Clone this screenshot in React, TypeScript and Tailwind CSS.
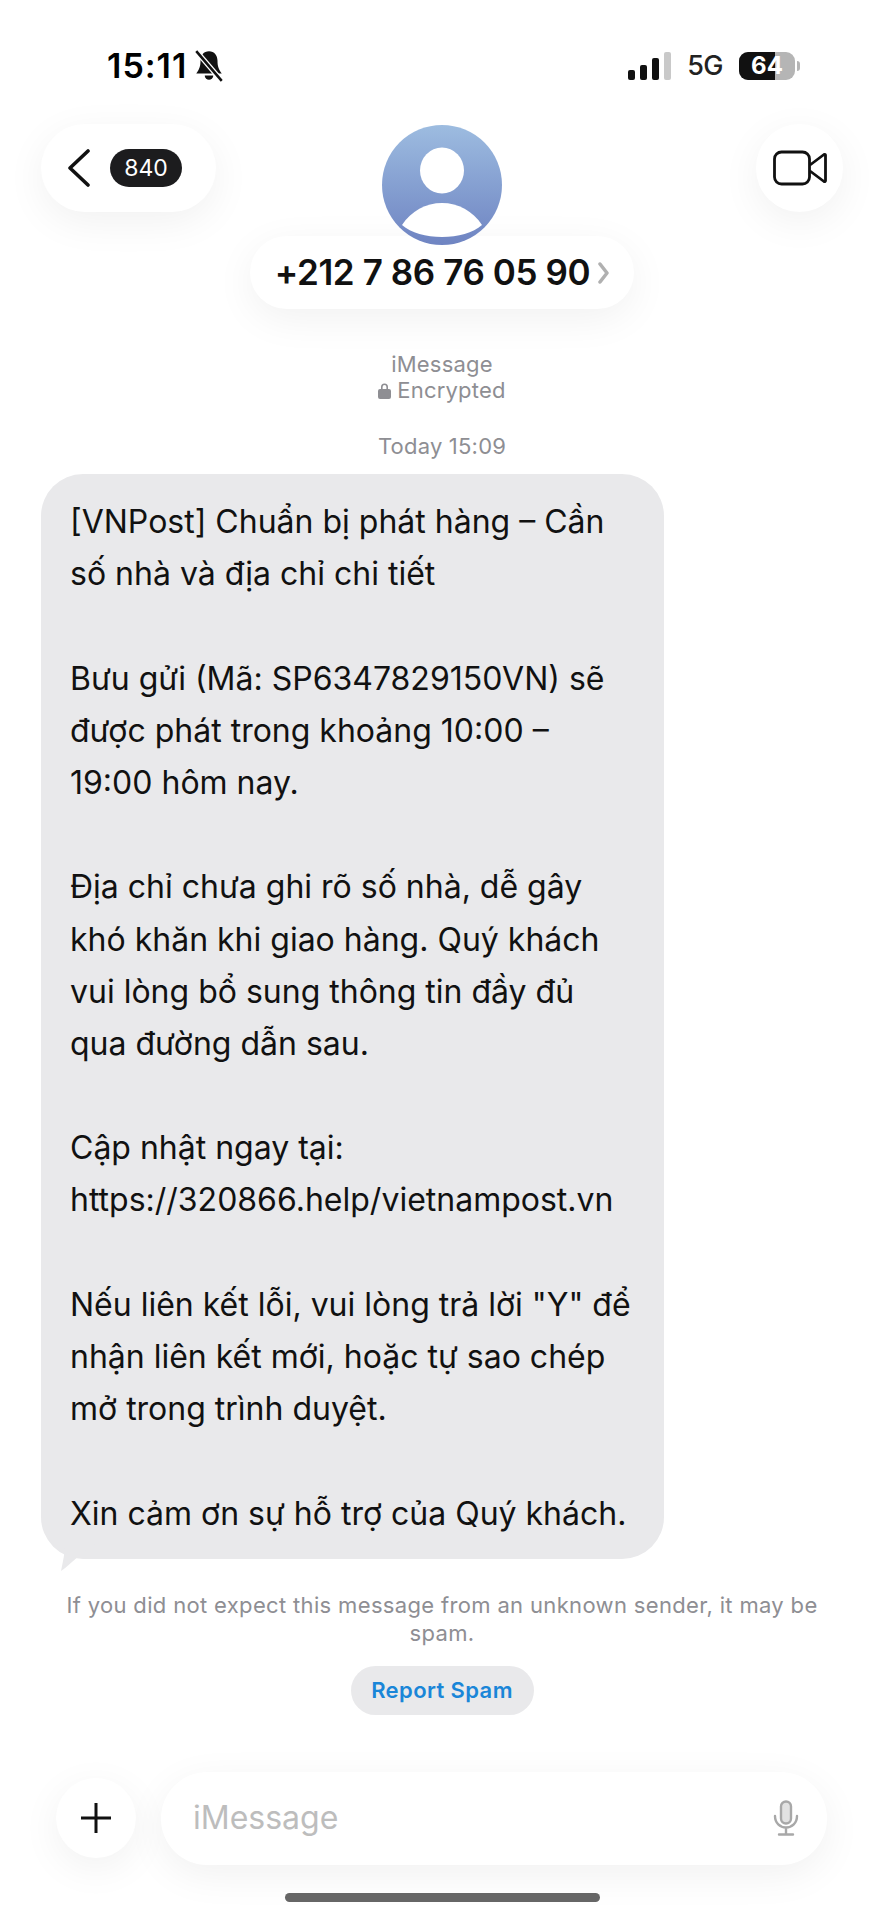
const lines = [
  "[VNPost] Chuẩn bị phát hàng – Cần",
  "số nhà và địa chỉ chi tiết",
  "",
  "Bưu gửi (Mã: SP6347829150VN) sẽ",
  "được phát trong khoảng 10:00 –",
  "19:00 hôm nay.",
  "",
  "Địa chỉ chưa ghi rõ số nhà, dễ gây",
  "khó khăn khi giao hàng. Quý khách",
  "vui lòng bổ sung thông tin đầy đủ",
  "qua đường dẫn sau.",
  "",
  "Cập nhật ngay tại:",
  "https://320866.help/vietnampost.vn",
  "",
  "Nếu liên kết lỗi, vui lòng trả lời \"Y\" để",
  "nhận liên kết mới, hoặc tự sao chép",
  "mở trong trình duyệt.",
  "",
  "Xin cảm ơn sự hỗ trợ của Quý khách.",
];

export default function App() {
  return (
    <div className="relative flex h-[1920px] w-[884px] flex-col overflow-hidden bg-white font-['Inter','Roboto',sans-serif] text-black">
      {/* status bar */}
      <div className="flex h-[124px] items-start justify-between pl-[107px] pr-[84px] pt-[46px]">
        <div className="flex items-center gap-[6px]">
          <span className="text-[34px] font-semibold leading-[40px] tracking-[1px]">15:11</span>
          <svg width="32" height="34" viewBox="0 0 30 32" fill="#111">
            <path d="M15 2c-5 0-8 4-8 9 0 5-1 8-4 12h24c-3-4-4-7-4-12 0-5-3-9-8-9z" />
            <path d="M11 25h8a4 4 0 0 1-8 0z" />
            <path d="M3 2 27 30" stroke="#fff" strokeWidth="5" />
            <path d="M3 2 27 30" stroke="#111" strokeWidth="2.4" />
          </svg>
        </div>
        <div className="flex items-center gap-[16px] pt-[5px]">
          <div className="flex h-[28px] items-end gap-[5px]">
            <div className="h-[10px] w-[7px] rounded-[2px] bg-[#111]" />
            <div className="h-[15px] w-[7px] rounded-[2px] bg-[#111]" />
            <div className="h-[22px] w-[7px] rounded-[2px] bg-[#111]" />
            <div className="h-[28px] w-[7px] rounded-[2px] bg-[#c9c9c9]" />
          </div>
          <span className="text-[27px] font-medium leading-[30px] tracking-[-0.5px] text-[#222]">5G</span>
          <div className="flex items-center">
            <div className="relative flex h-[28px] w-[56px] items-center justify-center overflow-hidden rounded-[9px] bg-[#b5b5b5]">
              <div className="absolute inset-y-0 left-0 w-[36px] bg-[#111]" />
              <span className="relative text-[24px] font-bold leading-none text-white">64</span>
            </div>
            <div className="ml-[2px] h-[10px] w-[3px] rounded-r-[3px] bg-[#b5b5b5]" />
          </div>
        </div>
      </div>

      {/* nav */}
      <div className="grid grid-cols-[1fr_auto_1fr] items-start pl-[41px] pr-[41px]">
        <div className="flex h-[88px] w-[175px] items-center gap-[18px] justify-self-start rounded-[44px] bg-white pl-[25px] shadow-[0_10px_40px_rgba(0,0,0,0.06)]">
          <svg width="26" height="38" viewBox="0 0 26 38" fill="none" stroke="#111" strokeWidth="3.6" strokeLinecap="round" strokeLinejoin="round">
            <path d="M22 2 4 19l18 17" />
          </svg>
          <div className="flex h-[38px] w-[72px] items-center justify-center rounded-[19px] bg-[#1c1c1e] text-[23px] leading-none text-white">840</div>
        </div>
        <div className="flex flex-col items-center">
          <div className="relative mt-[1px] h-[120px] w-[120px] overflow-hidden rounded-full bg-gradient-to-b from-[#9dbce0] to-[#6f84c2]">
            <svg className="absolute inset-0" width="120" height="120" viewBox="0 0 120 120" fill="#fff">
              <ellipse cx="60" cy="45.5" rx="22" ry="23" />
              <path d="M20 100C29 86 44 78 60 78s31 8 40 22c-9 8-24 12-40 12s-31-4-40-12z" />
            </svg>
          </div>
          <div className="-mt-[9px] flex h-[73px] w-[384px] items-center justify-center gap-[8px] rounded-[37px] bg-white shadow-[0_10px_40px_rgba(0,0,0,0.06)]">
            <span className="text-[35px] font-semibold leading-none tracking-[-0.4px] text-[#111]">+212 7 86 76 05 90</span>
            <svg width="11" height="24" viewBox="0 0 11 24" fill="none" stroke="#b0b0b0" strokeWidth="3.5" strokeLinecap="round" strokeLinejoin="round">
              <path d="M2 3l7 9-7 9" />
            </svg>
          </div>
        </div>
        <div className="flex h-[88px] w-[87px] items-center justify-center justify-self-end rounded-full bg-white shadow-[0_10px_40px_rgba(0,0,0,0.06)]">
          <svg width="54" height="36" viewBox="0 0 54 36" fill="none" stroke="#111" strokeWidth="2.8" strokeLinejoin="round">
            <rect x="1.5" y="2" width="35" height="32" rx="7" />
            <path d="M37 15 51 4.5a1 1 0 0 1 1.5 1v25a1 1 0 0 1-1.5 1L37 21" />
          </svg>
        </div>
      </div>

      {/* meta */}
      <div className="mt-[42px] flex flex-col items-center text-[22px] tracking-[0.2px] text-[#8e8e93]">
        <div className="leading-[26px]">iMessage</div>
        <div className="flex items-center gap-[6px] leading-[26px]">
          <svg width="13" height="17" viewBox="0 0 13 17" fill="#8e8e93">
            <path d="M3 7V5a3.5 3.5 0 0 1 7 0v2h1a2 2 0 0 1 2 2v6a2 2 0 0 1-2 2H2a2 2 0 0 1-2-2V9a2 2 0 0 1 2-2zm1.6 0h3.8V5a1.9 1.9 0 0 0-3.8 0z" />
          </svg>
          Encrypted
        </div>
        <div className="mt-[30px] leading-[26px]">Today 15:09</div>
      </div>

      {/* bubble */}
      <div className="relative ml-[41px] mt-[15px] w-[623px]">
        <div className="rounded-[42px] bg-[#e9e9eb] pb-[19px] pl-[29px] pr-[10px] pt-[22px]">
          {lines.map((l, i) => (
            <div key={i} className="h-[52.2px] whitespace-nowrap text-[32px] leading-[52.2px] text-[#111]">{l}</div>
          ))}
        </div>
        <svg className="absolute left-[18px] top-[calc(100%-16px)]" width="40" height="34" viewBox="0 0 40 34" fill="#e9e9eb">
          <path d="M6 0h34c-14 4-26 20-38 28C4 18 6 10 6 0z" />
        </svg>
      </div>

      {/* spam */}
      <div className="mt-[32px] text-center text-[22px] leading-[28px] tracking-[0.34px] text-[#8e8e93]">
        <div>If you did not expect this message from an unknown sender, it may be</div>
        <div>spam.</div>
      </div>
      <div className="mt-[19px] flex justify-center">
        <div className="flex h-[49px] w-[183px] items-center justify-center rounded-[25px] bg-[#e9e9eb] text-[22px] font-semibold tracking-[0.4px] text-[#1a86d8]">Report Spam</div>
      </div>

      {/* input */}
      <div className="mt-[57px] flex items-center gap-[25px] pl-[56px] pr-[57px]">
        <div className="flex h-[80px] w-[80px] items-center justify-center rounded-full bg-white shadow-[0_10px_40px_rgba(0,0,0,0.06)]">
          <svg width="32" height="32" viewBox="0 0 32 32" stroke="#111" strokeWidth="3">
            <path d="M16 1v30M1 16h30" />
          </svg>
        </div>
        <div className="flex h-[93px] flex-1 items-center justify-between rounded-[46px] bg-white pl-[32px] pr-[28px] shadow-[0_10px_40px_rgba(0,0,0,0.06)]">
          <span className="text-[32px] text-[#bdbdbd]">iMessage</span>
          <svg width="26" height="36" viewBox="0 0 26 36" fill="none" stroke="#a8a8a8" strokeWidth="2.4" strokeLinecap="round">
            <rect x="8" y="1.5" width="10" height="22" rx="5" fill="#e2e2e2" />
            <path d="M2 16c0 7 5 11.5 11 11.5S24 23 24 16M13 28v6M6 34.5h14" />
          </svg>
        </div>
      </div>

      {/* home bar */}
      <div className="mx-auto mt-[28px] h-[9px] w-[315px] rounded-full bg-[#666]" />
    </div>
  );
}
